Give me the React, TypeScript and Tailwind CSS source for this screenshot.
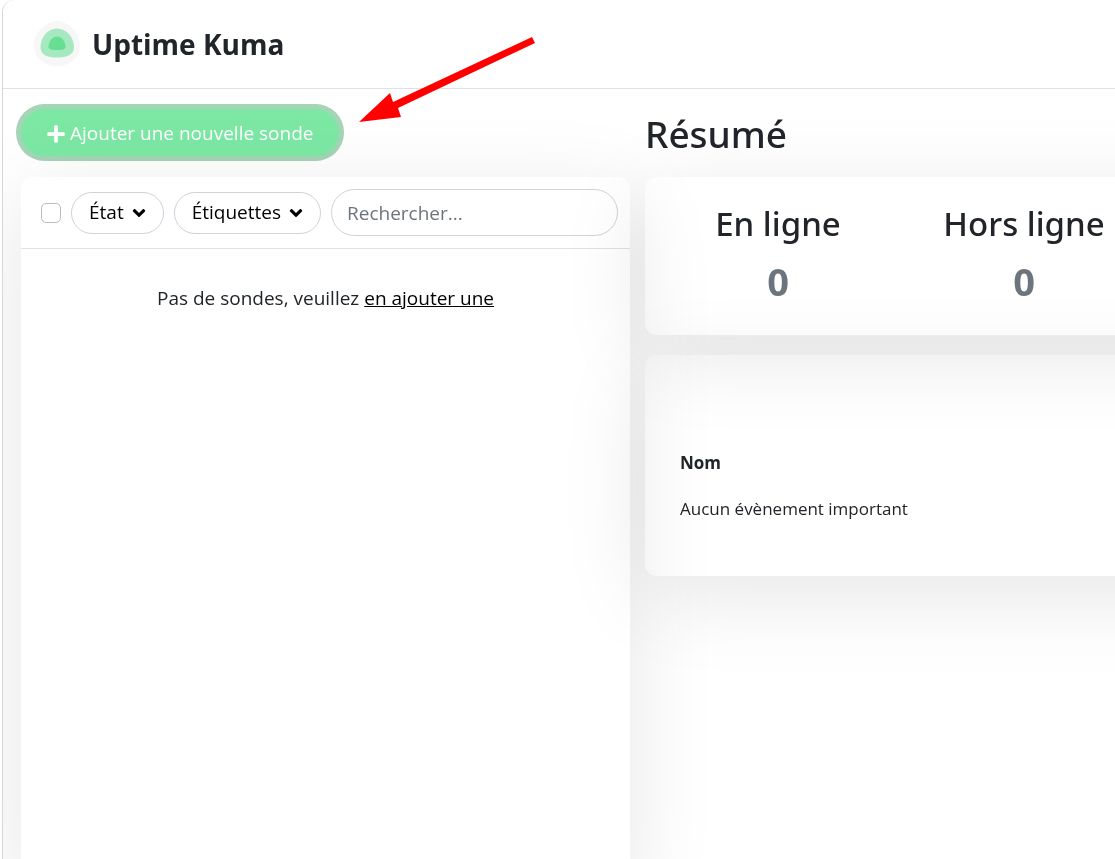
import { FaAngleDown, FaPlus } from "react-icons/fa";

const stats = [
    { label: "En ligne", value: 0 },
    { label: "Hors ligne", value: 0 },
];

const Logo = () => (
    <svg width="50" height="50" viewBox="0 0 50 50" aria-hidden="true">
        <path d="M25 2C36 2 48 14 48 26C48 39 38 47 25 47C12 47 2 39 2 26C2 14 14 2 25 2Z" fill="#f7f7f7" />
        <path d="M25 9.500C34 9.500 42 18 42 28C42 36 35 38.500 25 38.500C15 38.500 8.500 36 8.500 28C8.500 18 16 9.500 25 9.500Z" fill="#a6e8bf" />
        <path d="M25 17.500C30 17.500 33.500 23 33.500 28C33.500 30.500 30 31 25 31C20 31 16.500 30.500 16.500 28C16.500 23 20 17.500 25 17.500Z" fill="#66df93" />
    </svg>
);

const Header = () => (
    <header className="flex h-[89px] items-center border-b border-[#dee2e6] pl-[29px]">
        <a href="#" className="flex items-center gap-[10px]">
            <Logo />
            <span className="text-[28px] font-bold">Uptime Kuma</span>
        </a>
    </header>
);

const FilterButton = ({ label }: { label: string }) => (
    <button type="button" className="flex h-[42px] shrink-0 items-center gap-[7px] rounded-full border border-[#ced4da] pr-4 pl-[17px] text-black">
        {label}
        <FaAngleDown className="h-5 w-4" />
    </button>
);

const MonitorList = () => (
    <section className="min-h-[calc(100vh-152px)] rounded-xl bg-white mix-blend-multiply shadow-[0_19px_88px_rgba(0,0,0,0.1)]">
        <div className="flex h-[72px] items-center gap-[10px] border-b border-[#dee2e6] pr-3 pl-5">
            <input type="checkbox" aria-label="Tout sélectionner" className="size-5 shrink-0 appearance-none rounded-[5px] border border-[#b9bec3] bg-white" />
            <FilterButton label="État" />
            <FilterButton label="Étiquettes" />
            <input
                type="text"
                aria-label="Rechercher"
                placeholder="Rechercher..."
                className="h-[47px] min-w-0 flex-1 rounded-full border border-[#ced4da] bg-white px-[15px] placeholder:text-[#6c757d]"
            />
        </div>
        <p className="mt-[35px] text-center">
            Pas de sondes, veuillez <a href="#" className="text-black underline">en ajouter une</a>
        </p>
    </section>
);

const Summary = () => (
    <section className="rounded-xl bg-white pt-[23px] pr-[98px] pb-[29px] pl-[10px] mix-blend-multiply shadow-[0_19px_88px_rgba(0,0,0,0.1)]">
        <div className="grid grid-cols-2 text-center">
            {stats.map((stat) => (
                <div key={stat.label}>
                    <h3 className="font-['Noto_Sans','Open_Sans',sans-serif] text-[33px] leading-[48px] font-medium">{stat.label}</h3>
                    <span className="block pt-2 text-[38px] leading-[50px] font-bold text-[#6c757d]">{stat.value}</span>
                </div>
            ))}
        </div>
    </section>
);

const Events = () => (
    <section className="rounded-xl bg-white px-[35px] pt-[85px] pb-11 mix-blend-multiply shadow-[0_19px_88px_rgba(0,0,0,0.1)]">
        <table className="w-full text-left text-[17px]">
            <thead>
                <tr>
                    <th className="h-[46px] font-bold">Nom</th>
                </tr>
            </thead>
            <tbody>
                <tr>
                    <td className="h-[46px]">Aucun évènement important</td>
                </tr>
            </tbody>
        </table>
    </section>
);

// Callout arrow that points at the "add" button
const Arrow = () => (
    <svg className="pointer-events-none absolute top-9 left-[352px]" width="185" height="90" aria-hidden="true">
        <path d="M177 1L180 7L43 72L46 81L4 86L35 57L38 66Z" fill="#ff0000" />
    </svg>
);

const App = () => {
    return (
        <div className="h-screen overflow-hidden bg-white pl-[2px] font-['Open_Sans','Noto_Sans',sans-serif] text-[19px] text-[#212529]">
            <div className="relative isolate min-h-screen overflow-hidden rounded-tl-xl border-l border-[#d5d7d9] bg-white">
                <Header />
                <main className="grid w-[calc(100%+130px)] grid-cols-[609fr_600fr] gap-[15px] pt-5 pl-[18px]">
                    <div>
                        <button
                            type="button"
                            className="mb-[21px] flex h-[47px] items-center gap-1 rounded-full bg-[#7ce8a4] pt-[2px] pr-[26px] pl-[25px] text-white shadow-[0_0_0_5px_#a5d4b6]"
                        >
                            <FaPlus className="size-5" />
                            Ajouter une nouvelle sonde
                        </button>
                        <MonitorList />
                    </div>
                    <div className="flex flex-col gap-5">
                        <h1 className="mb-[-2px] h-[50px] font-['Noto_Sans','Open_Sans',sans-serif] text-[37px] leading-[50px] font-medium">Résumé</h1>
                        <Summary />
                        <Events />
                    </div>
                </main>
                <Arrow />
            </div>
        </div>
    );
};

export default App;
